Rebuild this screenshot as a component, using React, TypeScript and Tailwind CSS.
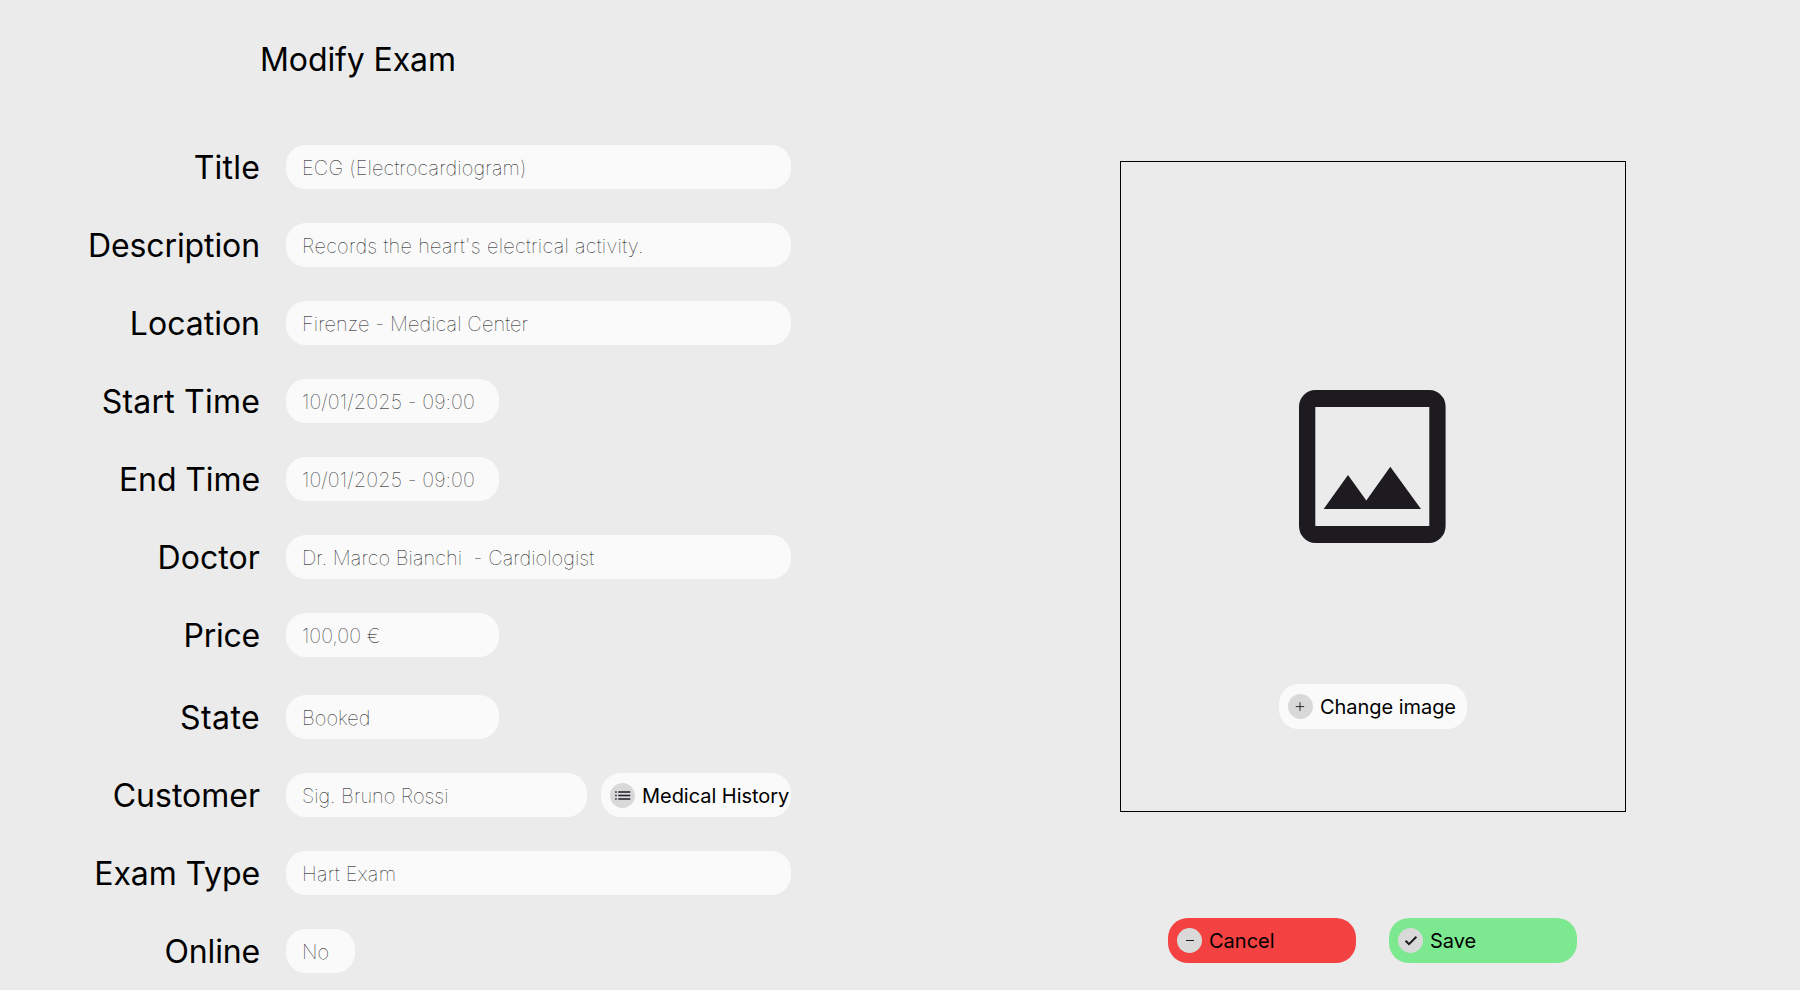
import React from "react";

type Field = {
  label: string;
  labelTracking: string;
  value: string;
  valueTracking: string;
  width: string;
  gap: string;
  history?: boolean;
};

const fields: Field[] = [
  { label: "Title", labelTracking: "tracking-[0.2px]", value: "ECG (Electrocardiogram)", valueTracking: "tracking-[0.16px]", width: "w-[505px]", gap: "" },
  { label: "Description", labelTracking: "tracking-[-0.1px]", value: "Records the heart's electrical activity.", valueTracking: "tracking-[0.29px]", width: "w-[505px]", gap: "mt-[34px]" },
  { label: "Location", labelTracking: "tracking-normal", value: "Firenze - Medical Center", valueTracking: "tracking-[0.1px]", width: "w-[505px]", gap: "mt-[34px]" },
  { label: "Start Time", labelTracking: "tracking-[0.2px]", value: "10/01/2025 - 09:00", valueTracking: "tracking-[0.08px]", width: "w-[213px]", gap: "mt-[34px]" },
  { label: "End Time", labelTracking: "tracking-[-0.1px]", value: "10/01/2025 - 09:00", valueTracking: "tracking-[0.08px]", width: "w-[213px]", gap: "mt-[34px]" },
  { label: "Doctor", labelTracking: "tracking-[0.1px]", value: "Dr. Marco Bianchi  - Cardiologist", valueTracking: "tracking-[0.07px]", width: "w-[505px]", gap: "mt-[34px]" },
  { label: "Price", labelTracking: "tracking-[-0.25px]", value: "100,00 €", valueTracking: "tracking-normal", width: "w-[213px]", gap: "mt-[34px]" },
  { label: "State", labelTracking: "tracking-[0.4px]", value: "Booked", valueTracking: "tracking-normal", width: "w-[213px]", gap: "mt-[38px]" },
  { label: "Customer", labelTracking: "tracking-normal", value: "Sig. Bruno Rossi", valueTracking: "tracking-[-0.02px]", width: "w-[301px]", gap: "mt-[34px]", history: true },
  { label: "Exam Type", labelTracking: "tracking-[-0.1px]", value: "Hart Exam", valueTracking: "tracking-[0.25px]", width: "w-[505px]", gap: "mt-[34px]" },
  { label: "Online", labelTracking: "tracking-[-0.15px]", value: "No", valueTracking: "tracking-normal", width: "w-[69px]", gap: "mt-[34px]" },
];

function PillButton({ label, className, children }: { label: string; className: string; children: React.ReactNode }) {
  return (
    <button className={`flex shrink-0 items-start gap-[7px] rounded-[20px] pt-2.5 pl-[9px] text-xl leading-[25px] whitespace-nowrap ${className}`}>
      <span className="h-[25px] w-[25px] shrink-0 rounded-full bg-[#d9d9d9]">
        <svg viewBox="0 0 25 25" className="h-[25px] w-[25px]" fill="none">
          {children}
        </svg>
      </span>
      <span className="pt-px">{label}</span>
    </button>
  );
}

export default function App() {
  return (
    <div className="flex h-[990px] w-[1800px] overflow-hidden bg-[#ebebeb] font-['Inter',sans-serif] text-black">
      <main className="w-[1120px] shrink-0">
        <h1 className="pt-10 pl-[260px] text-[32px] leading-[40px] tracking-[-0.1px]">Modify Exam</h1>
        <form className="mt-[65px]">
          {fields.map((f) => (
            <div key={f.label} className={`flex h-11 items-center ${f.gap}`}>
              <label className={`w-[260px] shrink-0 text-right text-[32px] leading-[44px] pt-0.5 ${f.labelTracking}`}>{f.label}</label>
              <div className={`ml-[26px] h-11 shrink-0 rounded-[20px] bg-[#fafafa] pl-4 text-xl leading-[46px] font-thin whitespace-pre ${f.width} ${f.valueTracking}`}>
                {f.value}
              </div>
              {f.history && (
                <PillButton label="Medical History" className="ml-3.5 h-11 w-[190px] bg-[#fafafa] tracking-[-0.04px]">
                  <path d="M5.200 8.200h1.500v1.500H5.200zM5.200 11.700h1.500v1.500H5.200zM5.200 15.200h1.500v1.500H5.200zM8.300 8.200h12v1.500H8.300zM8.300 11.700h12v1.500H8.300zM8.300 15.200h12v1.500H8.300z" fill="#1d1b20" />
                </PillButton>
              )}
            </div>
          ))}
        </form>
      </main>
      <aside className="w-[506px] shrink-0 pt-[161px]">
        <div className="flex h-[651px] flex-col items-center border border-black">
          <svg viewBox="0 0 147 153" className="mt-[228px] mr-px h-[153px] w-[147px]" fill="#1d1b20">
            <path fillRule="evenodd" d="M16.300 0H130.300Q137 0 141.900 5T146.600 17V136Q146.600 143 141.700 148T130.300 153H16.300Q9.600 153 4.800 148T0 136V17Q0 10 4.800 5T16.300 0ZM16.300 17V136H130.300V17Z" />
            <path d="M24.700 119 49 85 67.300 110.500 91.300 76.700 122 119Z" />
          </svg>
          <PillButton label="Change image" className="mt-[141px] h-[45px] w-[188px] bg-[#fafafa] tracking-[-0.05px]">
            <path d="M12 8.300v8.700M7.800 12.600h8.400" stroke="#1d1b20" strokeWidth="0.9" />
          </PillButton>
        </div>
        <div className="mt-[106px] flex gap-[33px] pl-12">
          <PillButton label="Cancel" className="h-[45px] w-[188px] bg-[#f44242]">
            <path d="M9 12.500h8" stroke="#1d1b20" strokeWidth="1" />
          </PillButton>
          <PillButton label="Save" className="h-[45px] w-[188px] bg-[#7ce88f]">
            <path d="M7.600 12.700 11 16.200 18.400 8.800" stroke="#1d1b20" strokeWidth="2" />
          </PillButton>
        </div>
      </aside>
    </div>
  );
}
